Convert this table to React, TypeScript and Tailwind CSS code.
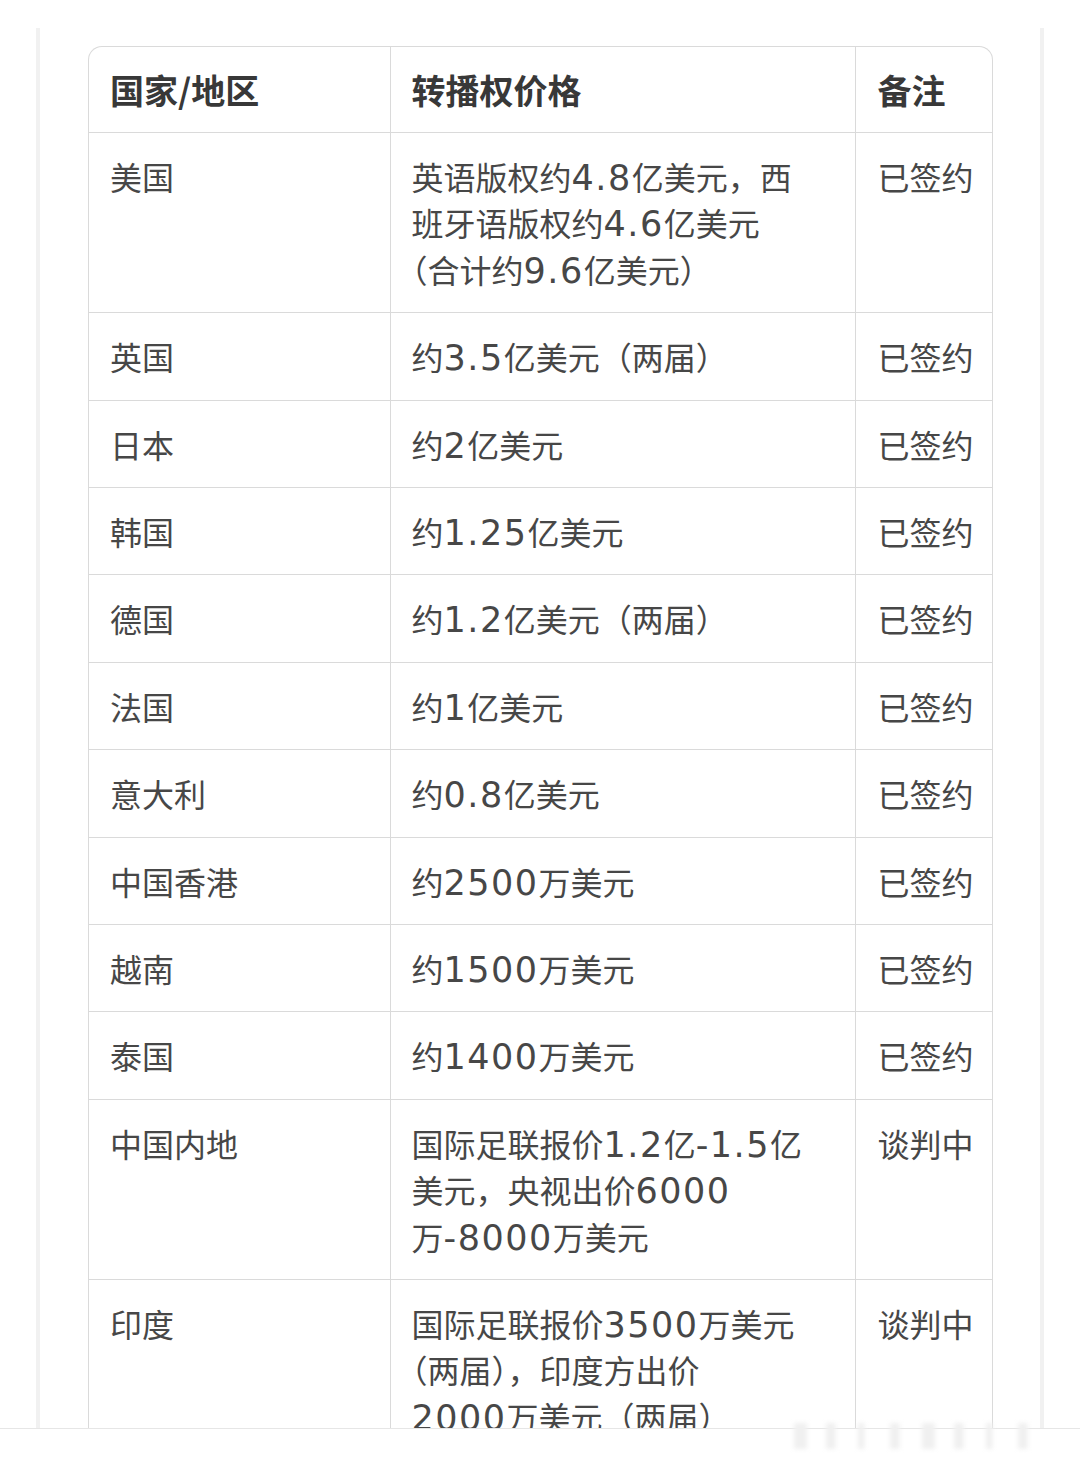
import React from 'react';

type Row = { region: string; price: string[]; note: string };

const ROWS: Row[] = [
  { region: '美国', price: ['英语版权约4.8亿美元，西', '班牙语版权约4.6亿美元', '（合计约9.6亿美元）'], note: '已签约' },
  { region: '英国', price: ['约3.5亿美元（两届）'], note: '已签约' },
  { region: '日本', price: ['约2亿美元'], note: '已签约' },
  { region: '韩国', price: ['约1.25亿美元'], note: '已签约' },
  { region: '德国', price: ['约1.2亿美元（两届）'], note: '已签约' },
  { region: '法国', price: ['约1亿美元'], note: '已签约' },
  { region: '意大利', price: ['约0.8亿美元'], note: '已签约' },
  { region: '中国香港', price: ['约2500万美元'], note: '已签约' },
  { region: '越南', price: ['约1500万美元'], note: '已签约' },
  { region: '泰国', price: ['约1400万美元'], note: '已签约' },
  { region: '中国内地', price: ['国际足联报价1.2亿-1.5亿', '美元，央视出价6000', '万-8000万美元'], note: '谈判中' },
  { region: '印度', price: ['国际足联报价3500万美元', '（两届），印度方出价', '2000万美元（两届）'], note: '谈判中' },
];

const font = { fontFamily: '"Noto Sans CJK SC", "Noto Sans", sans-serif' };

// digits in the screenshot are set larger and wider than the CJK font's own
function Txt({ s }: { s: string }) {
  const parts = s.split(/([0-9.\-]+)/);
  return (
    <>
      {parts.map((p, i) =>
        /^[0-9.\-]+$/.test(p) ? (
          <span key={i} className="font-['DejaVu_Sans'] text-[35px] tracking-[1.5px] leading-[0]">{p}</span>
        ) : (
          <span key={i}>{p}</span>
        )
      )}
    </>
  );
}

export default function App() {
  return (
    <div className="w-[1080px] h-[1460px] bg-white overflow-hidden flex flex-col" style={font}>
      {/* card area, clipped at the bottom like the screenshot */}
      <div className="h-[1428px] pt-[28px] px-[36px] overflow-hidden">
        <div className="h-full border-x-[4px] border-[#f1f1f1] pl-[48px] pr-[46px] pt-[18px]">
          <div className="w-[905px] rounded-t-[14px] border border-b-0 border-[#dadada] overflow-hidden bg-white">
            <table className="w-full border-collapse table-fixed">
              <colgroup>
                <col className="w-[301px]" />
                <col className="w-[465px]" />
                <col />
              </colgroup>
              <thead>
                <tr className="border-b border-[#dadada]">
                  <th className="text-left font-bold text-[34px] leading-[45px] text-[#383838] pl-[21px] py-5 border-r border-[#dadada]">国家/地区</th>
                  <th className="text-left font-bold text-[34px] leading-[45px] text-[#383838] pl-[21px] py-5 border-r border-[#dadada]">转播权价格</th>
                  <th className="text-left font-bold text-[34px] leading-[45px] text-[#383838] pl-[22px] py-5 whitespace-nowrap">备注</th>
                </tr>
              </thead>
              <tbody>
                {ROWS.map((r) => (
                  <tr key={r.region} className="border-b border-[#dadada] align-top">
                    <td className="text-[32px] leading-[46.4px] text-[#474747] pl-[21px] py-5 border-r border-[#dadada]">{r.region}</td>
                    <td className="text-[32px] leading-[46.4px] text-[#474747] pl-[21px] py-5 border-r border-[#dadada] whitespace-nowrap">
                      {r.price.map((line, i) => (
                        <div key={i} className="h-[46.4px] [text-spacing-trim:trim-start]">
                          <Txt s={line} />
                        </div>
                      ))}
                    </td>
                    <td className="text-[32px] leading-[46.4px] text-[#474747] pl-[22px] py-5 whitespace-nowrap">{r.note}</td>
                  </tr>
                ))}
              </tbody>
            </table>
          </div>
        </div>
      </div>
      {/* bottom strip with faint watermark */}
      <div className="relative flex-1 border-t border-[#e6e6e6] bg-white">
        <div className="absolute right-[30px] -top-[14px] text-[26px] text-[#f0f0f0] blur-[2px] tracking-[6px]">
          ▌▍▎▍▌▍▎▍
        </div>
      </div>
    </div>
  );
}
